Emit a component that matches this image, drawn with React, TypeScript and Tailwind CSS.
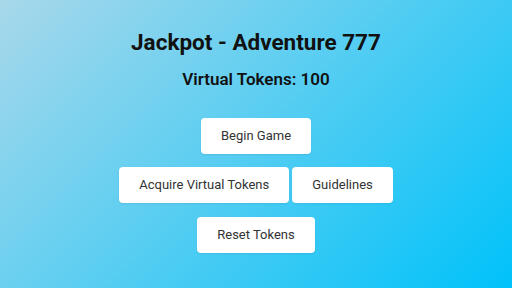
import React from "react";

const btn =
  "h-[36px] px-[20px] bg-white rounded-[4px] text-[13px] leading-[20px] text-[#333333] shadow-[0_1px_2px_rgba(0,0,0,0.08)]";

export default function App() {
  return (
    <div
      className="w-[512px] h-[288px] overflow-hidden bg-[linear-gradient(135deg,#a8d8ea_0%,#00c2fa_100%)] flex flex-col items-center pt-[26px]"
      style={{ fontFamily: "Roboto, 'Noto Sans', sans-serif" }}
    >
      <h1 className="text-[22.5px] leading-[32px] font-bold text-[#111111]">Jackpot - Adventure 777</h1>
      <h2 className="mt-[7.3px] text-[17px] leading-[28px] font-semibold text-[#111111]">Virtual Tokens: 100</h2>
      <div className="mt-[24.7px] flex flex-col items-center gap-[13.5px]">
        <button className={btn}>Begin Game</button>
        <div className="flex gap-[3px]">
          <button className={btn}>Acquire Virtual Tokens</button>
          <button className={btn}>Guidelines</button>
        </div>
        <button className={btn}>Reset Tokens</button>
      </div>
    </div>
  );
}
